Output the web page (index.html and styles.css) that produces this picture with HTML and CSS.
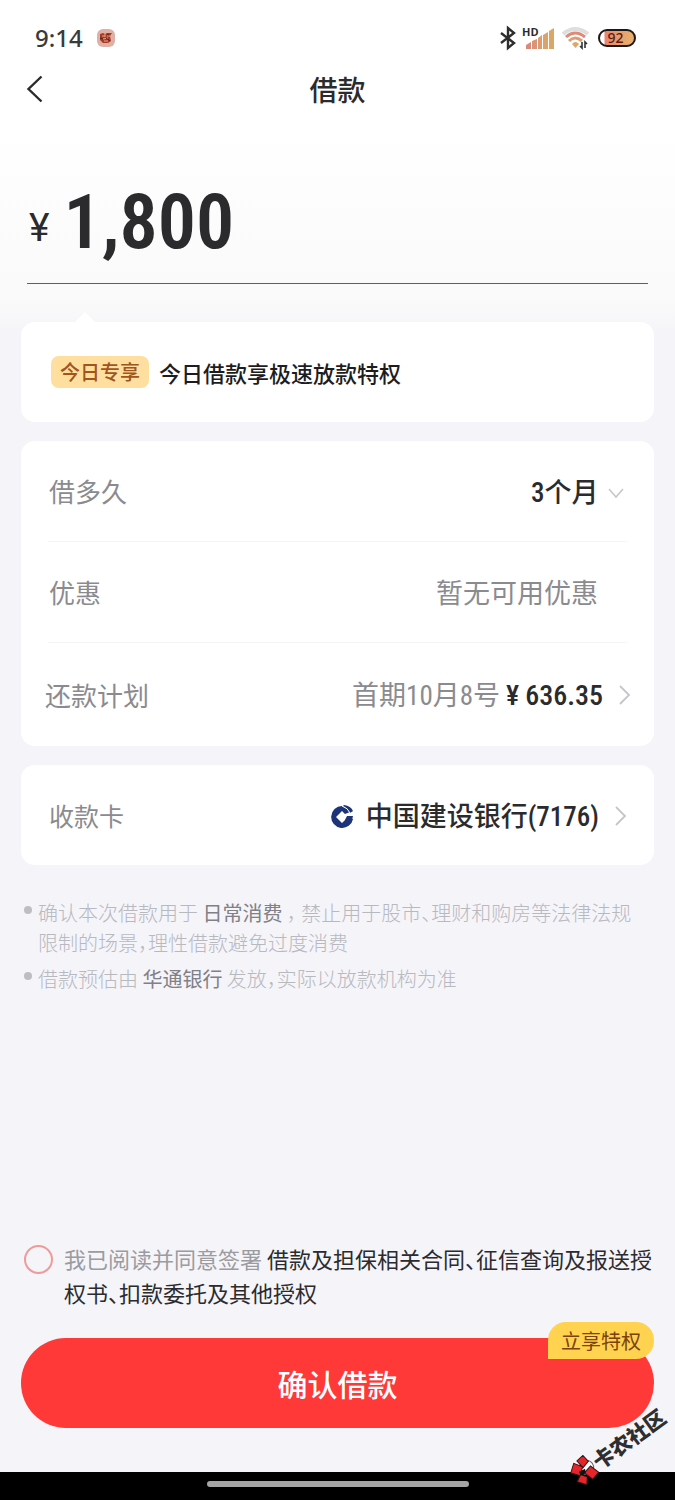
FILE: index.html
```html
<!DOCTYPE html>
<html lang="zh-CN">
<head>
<meta charset="utf-8">
<meta name="viewport" content="width=device-width, initial-scale=1">
<title>借款</title>
<link rel="stylesheet" href="styles.css">
</head>
<body>
<div class="page">
  <div class="statusbar">
    <span class="clock">9:14</span>
    <svg class="app-icon" width="18" height="18" viewBox="0 0 18 18" aria-hidden="true">
      <rect width="18" height="18" rx="6" fill="#dfb0a5"/>
      <path d="M3 5l3-1 2 1 2-1 5 0-2 3 1 5-3 2H6l-3-3z" fill="#a63c26"/>
      <path d="M5 7h3M10 7h3M6 10l5-1M8 4v4M7 12h4" stroke="#e7a28e" stroke-width="1" fill="none"/>
      <path d="M3 9l3 1M9 9l4 3M10 5l2 1" stroke="#5d1d12" fill="none"/>
    </svg>
    <div class="indicators">
      <svg width="18" height="26" viewBox="0 0 18 26" aria-label="蓝牙" role="img">
        <path d="M2 8l13 10-6 5V3l6 5L2 18" fill="none" stroke="#2e2e2e" stroke-width="2.4" stroke-linejoin="miter"/>
      </svg>
      <div class="signal">
        <span class="hd">HD</span>
        <svg width="28" height="21" viewBox="0 0 28 21" aria-label="信号" role="img">
          <path d="M0 17l5-3v7H0z" fill="#d98a7c"/>
          <path d="M6 13l5-2v10H6z" fill="#dc9377"/>
          <path d="M12 10l4-3v14h-4z" fill="#dc9b72"/>
          <path d="M17 7l5-3v17h-5z" fill="#dba36c"/>
          <path d="M23 3l5-3v21h-5z" fill="#d9a866"/>
        </svg>
      </div>
      <svg width="30" height="24" viewBox="0 0 30 24" aria-label="无线网络" role="img">
        <path d="M2 8Q14-2 27 8" fill="none" stroke="#dedede" stroke-width="4"/>
        <path d="M5 11Q14 3 24 11" fill="none" stroke="#dc8b78" stroke-width="3"/>
        <path d="M8 15Q14 9 21 15" fill="none" stroke="#dd9e75" stroke-width="3"/>
        <path d="M11 18q3.500-4 7 0l-3.500 4z" fill="#dda66c"/>
        <path d="M21 16v6l-2-2M24 22v-6l2 2" fill="none" stroke="#333" stroke-width="1.600"/>
      </svg>
      <span class="battery">92</span>
    </div>
  </div>

  <header class="navbar">
    <button class="back" type="button" aria-label="返回">
      <svg width="18" height="30" viewBox="0 0 18 30"><path d="M15.500 2.500L2.500 15l13 12.500" fill="none" stroke="#2b2b2e" stroke-width="2.400"/></svg>
    </button>
    <h1 class="title">借款</h1>
  </header>

  <main class="content">
    <div class="amount">
      <label class="currency" for="amount">¥</label>
      <input class="amount-input" id="amount" type="text" inputmode="numeric" value="1,800">
    </div>

    <section class="card promo">
      <span class="promo-tag">今日专享</span>
      <span class="promo-text">今日借款享极速放款特权</span>
    </section>

    <section class="card details">
      <div class="row">
        <label class="label" for="term">借多久</label>
        <span class="value">
          <select class="term" id="term"><option>3个月</option></select>
          <svg class="chevron" width="16" height="16" viewBox="0 0 16 16" aria-hidden="true"><path d="M1 4l7 8 7-8" fill="none" stroke="#c6c6ca" stroke-width="1.500"/></svg>
        </span>
      </div>
      <div class="row">
        <span class="label">优惠</span>
        <span class="value muted no-arrow">暂无可用优惠</span>
      </div>
      <button class="row plan" type="button">
        <span class="label">还款计划</span>
        <span class="value"><span class="muted plan-date">首期10月8号</span><span class="yen">¥</span><span class="sum">636.35</span>
          <svg class="chevron" width="12" height="22" viewBox="0 0 12 22" aria-hidden="true"><path d="M1 1l9 9-9 9" fill="none" stroke="#c6c6ca" stroke-width="1.800"/></svg>
        </span>
      </button>
    </section>

    <section class="card">
      <button class="row account" type="button">
        <span class="label small">收款卡</span>
        <span class="value">
          <svg class="bank-logo" width="24" height="24" viewBox="0 0 24 24" aria-hidden="true">
            <path d="M12 1A11 11 0 1 0 23 14L18 12 12 18 6 12 12 6 15 9 20 7Q17 2 12 1z" fill="#1c3478"/>
            <path d="M14 0q7 1 9 6l-3 2q-2-5-7-7z" fill="#1c3478"/>
            <path d="M12 1q6 2 8 7" fill="none" stroke="#fff" stroke-width="1"/>
            <path d="M17 11h6l-1 4h-7z" fill="#1c3478"/>
          </svg>
          <span>中国建设银行(7176)</span>
          <svg class="chevron" width="12" height="22" viewBox="0 0 12 22" aria-hidden="true"><path d="M1 1l9 9-9 9" fill="none" stroke="#c6c6ca" stroke-width="1.800"/></svg>
        </span>
      </button>
    </section>

    <ul class="notes">
      <li>确认本次借款用于 <em>日常消费</em> ， 禁止用于股市、理财和购房等法律法规限制的场景，理性借款避免过度消费</li>
      <li>借款预估由 <em>华通银行</em> 发放，实际以放款机构为准</li>
    </ul>
  </main>

  <footer class="footer">
    <div class="agreement">
      <input class="agree" id="agree" type="checkbox">
      <label class="agree-text" for="agree">我已阅读并同意签署 <a href="#contracts">借款及担保相关合同、征信查询及报送授权书、扣款委托及其他授权</a></label>
    </div>
    <div class="submit-wrap">
      <button class="submit" type="button">确认借款</button>
      <span class="submit-badge">立享特权</span>
    </div>
  </footer>

  <div class="gesture-bar"><span class="gesture-handle"></span></div>

  <div class="watermark">
    <svg width="26" height="28" viewBox="0 0 26 28" aria-hidden="true">
      <circle cx="17" cy="13" r="7" fill="#fff" stroke="#666"/>
      <path d="M1 8l8-6 5 8-7 6zM13 2l8-1 1 8-8 2zM1 19l7-4 4 6-5 6zM12 16l9-2 3 10-9 2z" fill="#e5252a" stroke="#331414"/>
      <path d="M8 12l7 1-2 4-5-1z" fill="#111"/>
    </svg>
    <span>卡农社区</span>
  </div>
</div>
</body>
</html>
```
FILE: styles.css
```css
* {
  box-sizing: border-box;
}

body {
  margin: 0;
  font-family: "Noto Sans CJK SC", sans-serif;
  color: #2b2b2e;
  background: #f4f4f9;
}

button,
input,
select {
  margin: 0;
  padding: 0;
  border: 0;
  background: none;
  color: inherit;
  font: inherit;
}

.page {
  position: relative;
  display: flex;
  flex-direction: column;
  min-height: 100vh;
  overflow: hidden;
  background: linear-gradient(#fff 120px, #f9f9fa 310px, #f4f4f9 336px);
}

.statusbar {
  display: flex;
  align-items: center;
  height: 64px;
  padding: 12px 39px 0 35px;
}

.clock {
  font-family: "Noto Sans", sans-serif;
  font-size: 24px;
  font-weight: 500;
  line-height: 32px;
  color: #3a3a3a;
}

.app-icon {
  margin-left: 14px;
}

.indicators {
  display: flex;
  align-items: center;
  gap: 7px;
  margin-left: auto;
}

.signal {
  display: flex;
  position: relative;
  padding-left: 2px;
}

.hd {
  position: absolute;
  top: -2px;
  left: -2px;
  font-family: "Open Sans", sans-serif;
  font-size: 11px;
  font-weight: 700;
  line-height: 12px;
}

.battery {
  width: 38px;
  height: 18px;
  padding-right: 3px;
  border: 2px solid #1d1715;
  border-radius: 9px;
  background: linear-gradient(90deg, #fff 4px, #e98570 5px, #e8ad6c 30px);
  font-family: "Noto Sans", sans-serif;
  font-size: 14px;
  font-weight: 500;
  line-height: 14px;
  text-align: center;
  color: #5a1c0c;
}

.navbar {
  display: flex;
  align-items: center;
  justify-content: center;
  position: relative;
  height: 50px;
}

.back {
  display: flex;
  position: absolute;
  left: 26px;
}

.title {
  margin: 0;
  font-size: 28px;
  font-weight: 500;
  line-height: 40px;
}

.content {
  padding: 0 21px;
}

.amount {
  display: flex;
  align-items: flex-start;
  gap: 14px;
  height: 170px;
  margin: 0 6px 38px;
  padding-top: 62px;
  border-bottom: 1px solid #5f5f61;
}

.currency {
  margin-top: 28px;
  padding-left: 2px;
  font-family: Roboto, sans-serif;
  font-size: 39px;
  line-height: 48px;
}

.amount-input {
  flex: 1;
  min-width: 0;
  height: 92px;
  font-family: "Roboto Condensed", "Open Sans Condensed", "Noto Sans Condensed", Roboto, sans-serif;
  font-size: 76px;
  font-weight: 600;
  line-height: 92px;
}

.card {
  margin-bottom: 19px;
  border-radius: 14px;
  background: #fff;
}

.promo {
  display: flex;
  align-items: center;
  gap: 10px;
  position: relative;
  height: 100px;
  padding: 0 30px;
}

.promo::before {
  content: "";
  position: absolute;
  top: -10px;
  left: 54px;
  border: 10px solid transparent;
  border-top: 0;
  border-bottom-color: #fff;
}

.promo-tag {
  padding: 0 9px;
  border-radius: 8px;
  background: #ffdf9f;
  font-size: 20px;
  font-weight: 500;
  line-height: 32px;
  color: #a1541d;
}

.promo-text {
  font-size: 22px;
  font-weight: 500;
  line-height: 32px;
  color: #1d1d1f;
}

.details {
  display: flex;
  flex-direction: column;
  padding: 0 27px;
}

.row {
  display: flex;
  align-items: center;
  justify-content: space-between;
  width: 100%;
  min-height: 101px;
  border-bottom: 1px solid #f5f5f7;
  text-align: left;
}

.row:last-child {
  min-height: 100px;
  border-bottom: 0;
}

.details .row:last-child {
  min-height: 103px;
}

.label {
  padding-left: 1px;
  font-size: 26px;
  line-height: 40px;
  color: #8b8b8f;
}

.small {
  font-size: 25px;
}

.value {
  display: flex;
  align-items: center;
  padding-top: 3px;
  font-family: "Roboto Condensed", Roboto, "Noto Sans CJK SC", sans-serif;
  font-size: 27px;
  font-weight: 500;
  line-height: 40px;
}

.term {
  appearance: none;
  height: 40px;
}

.chevron {
  margin-left: 16px;
}

.term + .chevron {
  margin: 0 3px 0 9px;
}

.muted {
  font-weight: 400;
  color: #8b8b8f;
}

.no-arrow {
  padding-right: 29px;
}

.plan {
  width: auto;
  align-self: stretch;
  margin: 0 -4px;
}

.plan-date {
  margin-right: 6px;
}

.yen {
  margin-right: 6px;
}

.yen,
.sum {
  font-size: 28px;
}

.account {
  padding: 0 27px;
}

.bank-logo {
  margin-right: 12px;
}

.notes {
  display: flex;
  flex-direction: column;
  gap: 6px;
  margin: 33px 0 40px;
  padding: 0 16px 0 17px;
  list-style: none;
  font-size: 20px;
  font-weight: 300;
  line-height: 30px;
  font-feature-settings: "halt";
  color: #b8b8bf;
}

.notes li {
  position: relative;
}

.notes li::before {
  content: "";
  position: absolute;
  top: 8px;
  left: -14px;
  width: 8px;
  height: 8px;
  border-radius: 4px;
  background: #bdbdc4;
}

.notes em {
  font-style: normal;
  font-weight: 400;
  color: #808086;
}

.footer {
  margin-top: auto;
  padding: 0 21px 44px;
}

.agreement {
  display: flex;
  align-items: flex-start;
  gap: 11px;
  margin: 0 0 29px 3px;
}

.agree {
  appearance: none;
  flex: none;
  width: 29px;
  height: 29px;
  margin-top: 4px;
  border: 2px solid #f09a9a;
  border-radius: 50%;
}

.agree:checked {
  background: #ff3838;
}

.agree-text {
  font-size: 22px;
  font-weight: 400;
  line-height: 34px;
  font-feature-settings: "halt";
  color: #9b9ba0;
}

.agree-text a {
  color: #2b2b2e;
  text-decoration: none;
}

.submit-wrap {
  position: relative;
}

.submit {
  display: block;
  width: 100%;
  height: 90px;
  border-radius: 45px;
  background: #ff3838;
  font-size: 30px;
  font-weight: 500;
  line-height: 40px;
  color: #fff;
}

.submit-badge {
  position: absolute;
  top: -16px;
  right: 0;
  padding: 0 13px;
  border-radius: 18px 18px 18px 0;
  background: #ffd24f;
  font-size: 20px;
  line-height: 37px;
  color: #7a420c;
}

.gesture-bar {
  display: flex;
  justify-content: center;
  height: 28px;
  padding-top: 9px;
  background: #000;
}

.gesture-handle {
  width: 262px;
  height: 6px;
  border-radius: 3px;
  background: #a5a5a5;
}

.watermark {
  display: flex;
  align-items: center;
  position: absolute;
  right: 2px;
  bottom: 40px;
  transform: rotate(-36deg);
  font-size: 21px;
  font-weight: 900;
  line-height: 28px;
  color: #2e2e30;
}
```
